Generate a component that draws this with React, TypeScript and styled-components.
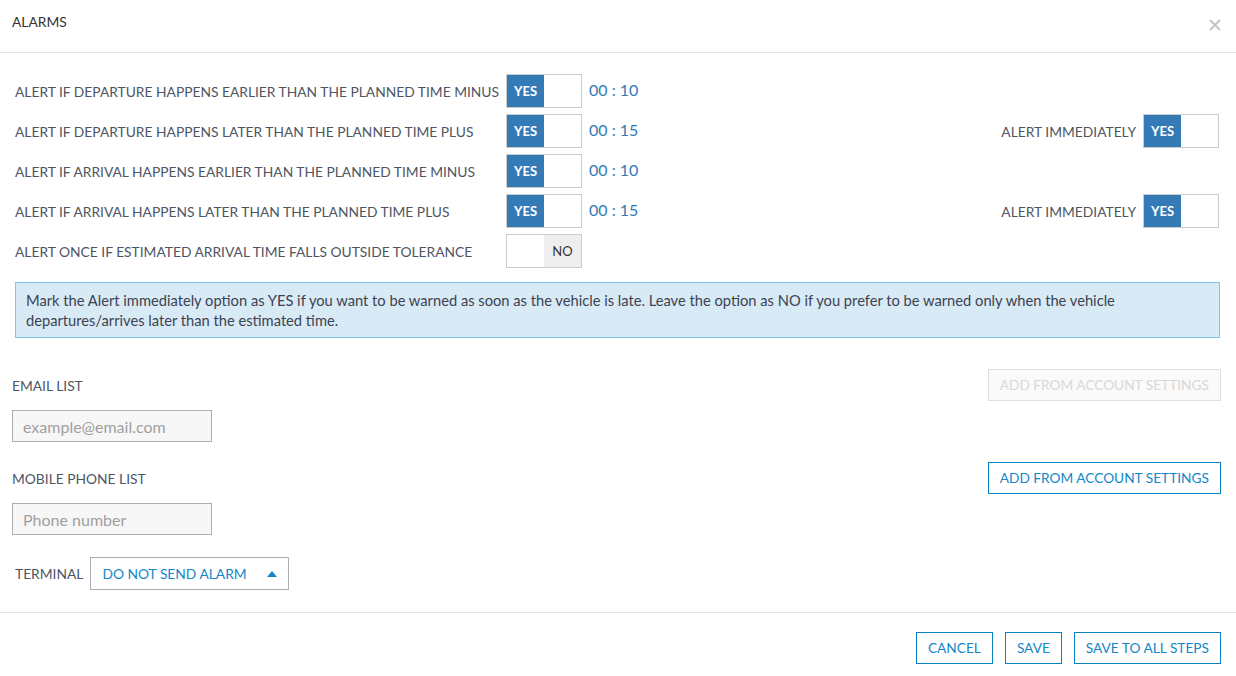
import React from "react";
import styled, { createGlobalStyle } from "styled-components";

const Global = createGlobalStyle`
  html, body { margin: 0; padding: 0; background: #fff; }
  body { font-family: Lato, "Open Sans", Arial, sans-serif; color: #4d5562; }
  * { box-sizing: border-box; }
`;

const Modal = styled.div`
  width: 1236px;
  height: 676px;
  background: #fff;
  display: flex;
  flex-direction: column;
`;

const Header = styled.div`
  height: 53px;
  border-bottom: 1px solid #e5e5e5;
  display: flex;
  align-items: flex-start;
  justify-content: space-between;
  padding: 13px 15px 0 12px;
`;

const Title = styled.div`
  font-size: 13.8px;
  line-height: 18px;
  color: #333;
`;

const Close = styled.button`
  border: none;
  background: none;
  padding: 0;
  margin-top: 6px;
  width: 12px;
  height: 12px;
  display: flex;
  cursor: pointer;
`;

const Body = styled.div`
  padding: 21px 16px 0 15px;
  display: flex;
  flex-direction: column;
`;

const Rows = styled.div`
  display: flex;
  flex-direction: column;
  gap: 6px;
  padding-right: 1px;
`;

const Row = styled.div`
  display: flex;
  align-items: center;
  height: 34px;
`;

const RowLabel = styled.div`
  width: 491px;
  font-size: 13.8px;
  color: #4d5562;
  white-space: nowrap;
`;

const Time = styled.div`
  margin-left: 7px;
  margin-bottom: 3px;
  font-size: 16px;
  color: #337ab7;
`;

const Right = styled.div`
  margin-left: auto;
  display: flex;
  align-items: center;
  gap: 7px;
  font-size: 13.8px;
  color: #4d5562;
`;

const Switch = styled.div`
  width: 76px;
  height: 34px;
  border: 1px solid #ccc;
  display: flex;
  background: #fff;
`;

const Seg = styled.div<{ $on?: boolean; $active: boolean }>`
  width: 38px;
  height: 100%;
  display: flex;
  align-items: center;
  justify-content: center;
  font-size: 13px;
  font-weight: ${(p) => (p.$on ? 700 : 400)};
  background: ${(p) => (p.$active ? (p.$on ? "#337ab7" : "#eee") : "#fff")};
  color: ${(p) => (p.$on ? "#fff" : "#333")};
`;

const Toggle = ({ on }: { on: boolean }) => (
  <Switch>
    {on ? (
      <>
        <Seg $on $active>YES</Seg>
        <Seg $active={false} />
      </>
    ) : (
      <>
        <Seg $active={false} />
        <Seg $active>NO</Seg>
      </>
    )}
  </Switch>
);

const Info = styled.div`
  margin-top: 14px;
  background: #d9eaf7;
  border: 1px solid #7fc7ea;
  padding: 7px 10px;
  font-size: 14.7px;
  line-height: 20px;
  color: #3c4350;
`;

const Section = styled.div`
  padding: 31px 15px 0 12px;
  display: flex;
  flex-direction: column;
`;

const LabelRow = styled.div<{ $mt?: number }>`
  display: flex;
  justify-content: space-between;
  align-items: center;
  height: 32px;
  margin-top: ${(p) => p.$mt ?? 0}px;
`;

const Label = styled.div`
  font-size: 13.8px;
  color: #4d5562;
`;

const OutlineButton = styled.button<{ $disabled?: boolean }>`
  height: 32px;
  padding: 0 11px;
  background: ${(p) => (p.$disabled ? "#fafafa" : "#fff")};
  border: 1px solid ${(p) => (p.$disabled ? "#e0e0e0" : "#0a82c6")};
  color: ${(p) => (p.$disabled ? "#d8d8d8" : "#1387c9")};
  font-family: Lato, Arial, sans-serif;
  font-size: 13.7px;
  line-height: 30px;
  cursor: pointer;
`;

const Input = styled.input<{ $mt?: number }>`
  width: 200px;
  height: 32px;
  margin-top: ${(p) => p.$mt ?? 0}px;
  border: 1px solid #a7afb7;
  background: #f7f7f7;
  padding: 0 10px;
  font-family: Lato, Arial, sans-serif;
  font-size: 16px;
  color: #333;
  &::placeholder { color: #a0a0a0; }
`;

const TerminalRow = styled.div`
  display: flex;
  align-items: center;
  gap: 7px;
  margin-top: 22px;
  padding-left: 3px;
`;

const Select = styled.div`
  width: 199px;
  height: 33px;
  border: 1px solid #a7afb7;
  display: flex;
  align-items: center;
  justify-content: space-between;
  padding: 0 11px 0 11px;
  font-size: 13.8px;
  color: #1387c9;
  background: #fff;
`;

const Footer = styled.div`
  margin-top: 22px;
  border-top: 1px solid #e5e5e5;
  padding: 19px 15px 0;
  display: flex;
  justify-content: flex-end;
  gap: 12px;
`;

const rows = [
  { label: "ALERT IF DEPARTURE HAPPENS EARLIER THAN THE PLANNED TIME MINUS", on: true, time: "00 : 10", imm: false },
  { label: "ALERT IF DEPARTURE HAPPENS LATER THAN THE PLANNED TIME PLUS", on: true, time: "00 : 15", imm: true },
  { label: "ALERT IF ARRIVAL HAPPENS EARLIER THAN THE PLANNED TIME MINUS", on: true, time: "00 : 10", imm: false },
  { label: "ALERT IF ARRIVAL HAPPENS LATER THAN THE PLANNED TIME PLUS", on: true, time: "00 : 15", imm: true },
  { label: "ALERT ONCE IF ESTIMATED ARRIVAL TIME FALLS OUTSIDE TOLERANCE", on: false, time: "", imm: false },
];

export default function App() {
  return (
    <>
      <Global />
      <Modal>
        <Header>
          <Title>ALARMS</Title>
          <Close aria-label="close">
            <svg width="12" height="12" viewBox="0 0 12 12">
              <path d="M1 1L11 11M11 1L1 11" stroke="#c4c4c4" strokeWidth="2" />
            </svg>
          </Close>
        </Header>
        <Body>
          <Rows>
            {rows.map((r) => (
              <Row key={r.label}>
                <RowLabel>{r.label}</RowLabel>
                <Toggle on={r.on} />
                {r.time && <Time>{r.time}</Time>}
                {r.imm && (
                  <Right>
                    ALERT IMMEDIATELY
                    <Toggle on />
                  </Right>
                )}
              </Row>
            ))}
          </Rows>
          <Info>
            Mark the Alert immediately option as YES if you want to be warned as soon as the vehicle is late. Leave the option as NO if you prefer to be warned only when the vehicle departures/arrives later than the estimated time.
          </Info>
        </Body>
        <Section>
          <LabelRow>
            <Label>EMAIL LIST</Label>
            <OutlineButton $disabled>ADD FROM ACCOUNT SETTINGS</OutlineButton>
          </LabelRow>
          <Input $mt={9} placeholder="example@email.com" />
          <LabelRow $mt={20}>
            <Label>MOBILE PHONE LIST</Label>
            <OutlineButton>ADD FROM ACCOUNT SETTINGS</OutlineButton>
          </LabelRow>
          <Input $mt={9} placeholder="Phone number" />
          <TerminalRow>
            <Label>TERMINAL</Label>
            <Select>
              DO NOT SEND ALARM
              <svg width="10" height="6" viewBox="0 0 10 6">
                <path d="M0 6L5 0L10 6Z" fill="#1387c9" />
              </svg>
            </Select>
          </TerminalRow>
        </Section>
        <Footer>
          <OutlineButton>CANCEL</OutlineButton>
          <OutlineButton>SAVE</OutlineButton>
          <OutlineButton>SAVE TO ALL STEPS</OutlineButton>
        </Footer>
      </Modal>
    </>
  );
}
